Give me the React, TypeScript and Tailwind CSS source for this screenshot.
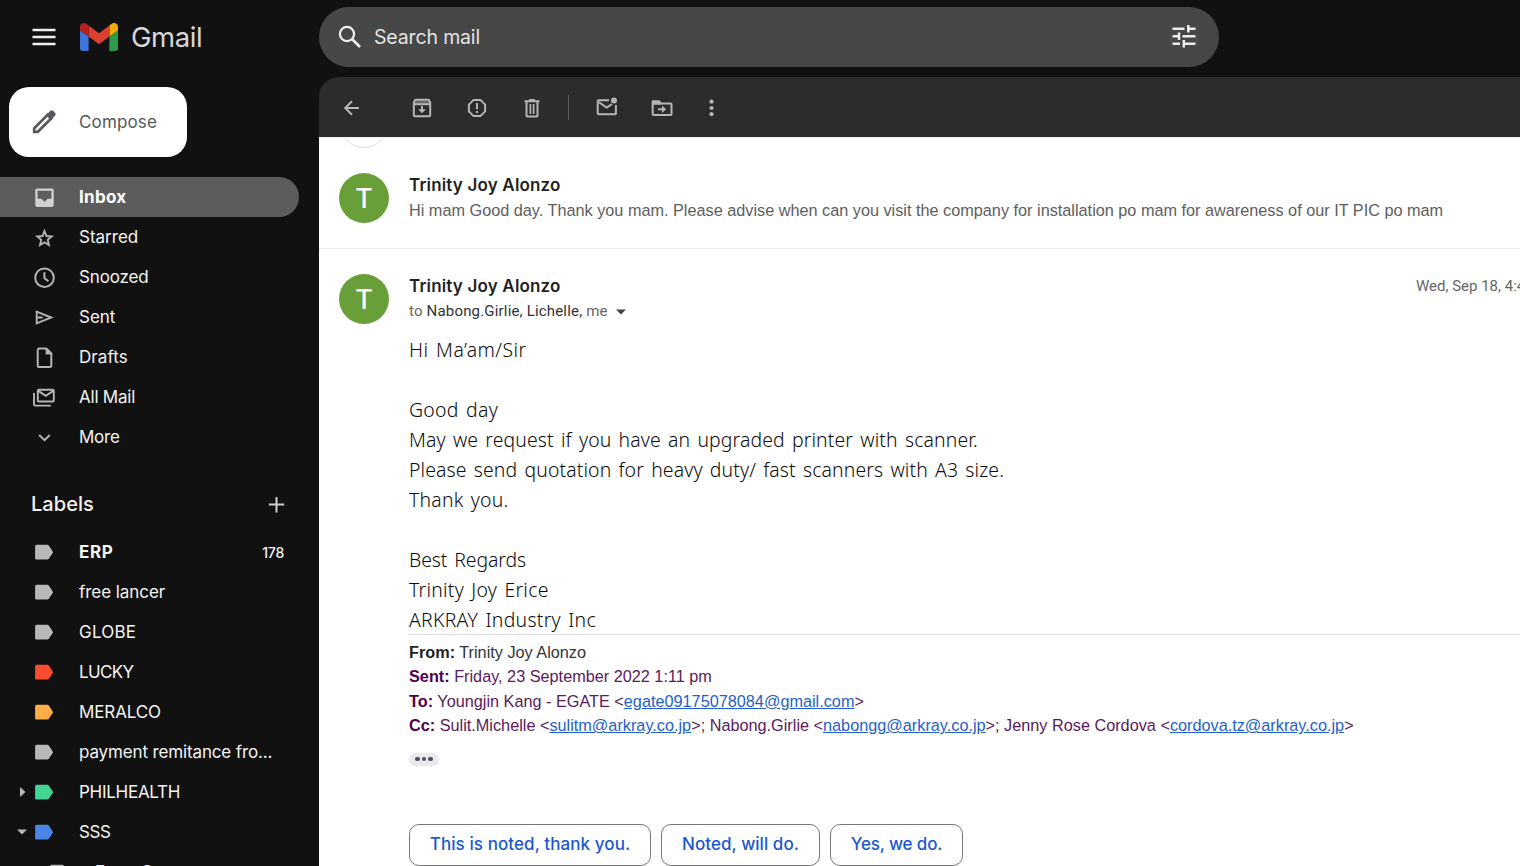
import type { ReactNode } from "react";

const sans = "font-['Inter','Roboto',sans-serif]";

function Icon({ w = 24, h = w, className = "", children }: { w?: number; h?: number; className?: string; children: ReactNode }) {
  return (
    <svg width={w} height={h} viewBox={`0 0 ${w} ${h}`} fill="none" stroke="currentColor" strokeWidth={2} className={`shrink-0 ${className}`}>
      {children}
    </svg>
  );
}

function GmailLogo() {
  return (
    <svg width="38" height="28" viewBox="52 42 88 66" preserveAspectRatio="none" className="shrink-0">
      <path fill="#3f74d8" d="M58 108h14V74L52 59v43c0 3.32 2.69 6 6 6" />
      <path fill="#2f9a4c" d="M120 108h14c3.32 0 6-2.69 6-6V59l-20 15" />
      <path fill="#eeb004" d="M120 48v26l20-15v-8c0-7.42-8.47-11.65-14.4-7.2" />
      <path fill="#da3f31" d="M72 74V48l24 18 24-18v26L96 92" />
      <path fill="#b8211f" d="M52 51v8l20 15V48l-5.6-4.2c-5.94-4.45-14.4-.22-14.4 7.2" />
    </svg>
  );
}

const navItems: { label: string; track: string; icon: ReactNode }[] = [
  {
    label: "Starred",
    track: "tracking-[0px]",
    icon: <path strokeWidth="1.9" strokeLinejoin="miter" d="M12.5 6.1l2 4.9 5.2.45-3.95 3.4 1.2 5.1-4.45-2.7-4.45 2.7 1.2-5.1-3.95-3.4 5.2-.45z" />,
  },
  {
    label: "Snoozed",
    track: "tracking-[-0.15px]",
    icon: (
      <>
        <circle cx="12.5" cy="12.7" r="9.3" />
        <path d="M12.4 7.200v5.8l4 3.2" />
      </>
    ),
  },
  {
    label: "Sent",
    track: "tracking-[0px]",
    icon: <path strokeWidth="1.9" d="M4.7 6.7v11.6l14.6-5.8zM4.7 12.5h6" />,
  },
  {
    label: "Drafts",
    track: "tracking-[0.1px]",
    icon: (
      <>
        <path strokeLinejoin="round" d="M14.5 3.6H7.2c-.9 0-1.5.6-1.5 1.5v15.3c0 .9.6 1.5 1.5 1.5h10.6c.9 0 1.5-.6 1.5-1.5V8.4z" />
        <path fill="currentColor" stroke="none" d="M13.6 3.4h1.6l5 5v1.2h-6.6z" />
      </>
    ),
  },
  {
    label: "All Mail",
    track: "tracking-[-0.23px]",
    icon: (
      <>
        <rect x="5.8" y="4.7" width="16" height="11.800" rx="1" strokeWidth="1.9" />
        <path strokeWidth="1.9" d="M6.3 5.900l7.5 4.900 7.5-4.900M2 8v11.400c0 .7.5 1.2 1.2 1.2h15.6" />
      </>
    ),
  },
  {
    label: "More",
    track: "tracking-[-0.25px]",
    icon: <path d="M7.2 10l5.3 5.2 5.3-5.2" />,
  },
];

const labels: { name: string; color: string; track: string; count?: string; caret?: "right" | "down" }[] = [
  { name: "ERP", color: "text-[#b8b8b8]", track: "font-bold tracking-[0.6px]", count: "178" },
  { name: "free lancer", color: "text-[#b8b8b8]", track: "tracking-[-0.05px]" },
  { name: "GLOBE", color: "text-[#b8b8b8]", track: "tracking-[0.2px]" },
  { name: "LUCKY", color: "text-[#fb4c2f]", track: "tracking-[-0.65px]" },
  { name: "MERALCO", color: "text-[#ffad46]", track: "tracking-[-0.12px]" },
  { name: "payment remitance fro...", color: "text-[#b8b8b8]", track: "tracking-[-0.14px]" },
  { name: "PHILHEALTH", color: "text-[#43d692]", track: "tracking-[-0.27px]", caret: "right" },
  { name: "SSS", color: "text-[#4986e7]", track: "tracking-[-0.4px]", caret: "down" },
];

function Tag() {
  return (
    <Icon w={20} h={16}>
      <path fill="currentColor" stroke="none" d="M2.800.8h10.400c.7 0 1.200.3 1.600.8l4.400 6.600-4.400 6.600c-.4.5-.9.8-1.600.8H2.800C1.900 15.600 1.100 14.900 1.100 14V2.500C1.100 1.600 1.900.8 2.800.8z" />
    </Icon>
  );
}

function Sidebar() {
  return (
    <aside className="flex w-[319px] shrink-0 flex-col overflow-hidden text-[17px] text-[#f4f4f4]">
      <div className="flex h-[77px] shrink-0 items-center pb-[3px] pl-8">
        <Icon w={24} className="text-[#ededed]">
          <path strokeWidth="2.4" d="M.5 5h23M.5 12h23M.5 19h23" />
        </Icon>
        <div className="ml-6 flex items-center">
          <GmailLogo />
          <span className="ml-[13px] text-[27.5px] leading-[30px] tracking-[-0.4px] text-[#d6d6d6]">Gmail</span>
        </div>
      </div>

      <button className="ml-[9px] mt-[10px] flex h-[70px] w-[178px] shrink-0 items-center rounded-[20px] bg-white pl-[23px] text-[#55585c]">
        <Icon w={24}>
          <path strokeWidth="2.700" d="M2.200 21.800v-3.600L15.800 4.600l3.600 3.600L5.800 21.800z" />
          <path fill="currentColor" stroke="none" d="M14 5.200L18.200 1c.9-.9 2.200-.9 3.100 0L23 2.700c.9.9.9 2.200 0 3.100L18.800 10z" />
        </Icon>
        <span className="ml-[23px] pt-[2px] tracking-[0.15px]">Compose</span>
      </button>

      <nav className="mt-5 flex flex-col">
        <a className="flex h-10 w-[299px] items-center rounded-r-full bg-[#5c5c5c] pl-8 font-bold text-white">
          <Icon w={25} className="text-[#d2d2d2]">
            <path
              fill="currentColor"
              stroke="none"
              fillRule="evenodd"
              d="M5.200 3.500h14.600c1.100 0 1.900.8 1.900 1.900V20c0 1.100-.8 1.900-1.900 1.900H5.200c-1.100 0-1.900-.8-1.900-1.900V5.400c0-1.100.8-1.900 1.900-1.900zM5.600 5.800v8h3.800l3.100 3 3.100-3h3.800v-8z"
            />
          </Icon>
          <span className="ml-[22px] pt-[2px] tracking-[0.3px]">Inbox</span>
        </a>
        {navItems.map((item) => (
          <a key={item.label} className="flex h-10 items-center pl-8">
            <Icon w={25} className="text-[#b4b4b4]">{item.icon}</Icon>
            <span className={`ml-[22px] pt-[2px] ${item.track}`}>{item.label}</span>
          </a>
        ))}
      </nav>

      <div className="mt-[27px] flex h-10 shrink-0 items-center justify-between pl-[31px] pr-[34px]">
        <span className="text-[20px] font-medium tracking-[0.05px]">Labels</span>
        <Icon w={17} className="text-[#cfcfcf]">
          <path d="M8.500 1v15.500M.8 8.500h15.400" />
        </Icon>
      </div>

      <div className="mt-2 flex flex-col">
        {labels.map((l) => (
          <a key={l.name} className="flex h-10 shrink-0 items-center pr-[35px]">
            <span className="flex w-[34px] shrink-0 justify-end pr-[7px] text-[#b8b8b8]">
              {l.caret === "right" && (
                <Icon w={10} className="mr-[-1px]"><path fill="currentColor" stroke="none" d="M2 0l5.500 5L2 10z" /></Icon>
              )}
              {l.caret === "down" && (
                <Icon w={10} h={6}><path fill="currentColor" stroke="none" d="M0 .5h10l-5 5z" /></Icon>
              )}
            </span>
            <span className={`flex ${l.color}`}><Tag /></span>
            <span className={`ml-[25px] whitespace-nowrap pt-[2px] ${l.track}`}>{l.name}</span>
            {l.count && <span className="ml-auto text-[14px] font-medium tracking-[-0.2px]">{l.count}</span>}
          </a>
        ))}
        <a className="flex h-10 shrink-0 items-center pl-[49px]">
          <span className="flex text-[#b8b8b8]"><Tag /></span>
          <span className="ml-[26px] pt-[2px]">From C</span>
        </a>
      </div>
    </aside>
  );
}

function SearchBar() {
  return (
    <div className="mt-[7px] flex h-[60px] w-[900px] shrink-0 items-center rounded-full bg-[#474747] pl-[19px] pr-[22px] text-[#ececec]">
      <Icon w={24}>
        <circle cx="9" cy="9" r="7.100" strokeWidth="2.300" />
        <path strokeWidth="2.700" d="M14 14l8 8" />
      </Icon>
      <span className="ml-[12px] pt-[2px] text-[19.5px] tracking-[-0.15px] text-[#e4e4e4]">Search mail</span>
      <Icon w={26} className="ml-auto">
        <path strokeWidth="2.500" d="M1.500 4.800h12M16.500 4.800h8M17.300 1v7.600M1.500 12.300h6M8 8.600v7.500M11.500 12.300h13M1.500 19.800h7.500M12.800 16v7.500M12.800 19.800h11.700" />
      </Icon>
    </div>
  );
}

function Toolbar() {
  return (
    <div className="mt-[10px] flex h-[60px] shrink-0 items-center rounded-tl-[20px] bg-[#2c2c2c] pl-[22px] text-[#b5b5b5]">
      <Icon w={22} className="mt-px">
        <path d="M18 11H5M11 4.200L4.200 11l6.800 6.800" />
      </Icon>
      <Icon w={22} className="ml-[47.5px] mt-px">
        <path fill="currentColor" fillOpacity=".45" stroke="none" d="M3 3.500h16v4H3z" />
        <path strokeLinejoin="round" d="M4.300 2.800h13.400l1.500 2.400v13c0 .6-.4 1-1 1H3.800c-.6 0-1-.4-1-1v-13zM3 7.200h16" />
        <path fill="currentColor" stroke="none" d="M10 8.900h2v3.300h2.900L11 16.200l-3.900-4H10z" />
      </Icon>
      <Icon w={22} className="ml-[33px] mt-px">
        <path strokeLinejoin="round" d="M7.600 2.900h6.800l4.700 4.700v6.800l-4.700 4.700H7.600l-4.700-4.700V7.600z" />
        <path d="M11 6v6.200M11 14v2" />
      </Icon>
      <Icon w={22} className="ml-[33px] mt-px">
        <path d="M3.500 4.300h15M8 2.900h6M5.500 4.500v14.200c0 .5.300.8.800.8h9.400c.5 0 .8-.3.800-.8V4.500" />
        <path strokeWidth="1.700" d="M9.400 7v10M12.600 7v10" />
      </Icon>
      <div className="ml-[25.5px] h-[25px] w-px bg-[#5a5a5a]" />
      <Icon w={24} h={22} className="ml-[26px]">
        <path strokeLinejoin="round" d="M14 4.300H3.500c-.4 0-.8.3-.8.8v12.300c0 .5.400.8.800.8h16.600c.5 0 .8-.3.800-.8V9" />
        <path d="M3.500 6l8.300 5.600L17 8" />
        <circle cx="19" cy="4.400" r="3" fill="currentColor" stroke="none" />
      </Icon>
      <Icon w={22} className="ml-[31.5px] mt-px">
        <path strokeLinejoin="round" d="M1.700 4.200h6.200l2.200 2.200h9.600c.4 0 .8.300.8.800v10.100c0 .5-.4.800-.8.800H2.500c-.5 0-.8-.3-.8-.8z" />
        <path fill="currentColor" stroke="none" d="M1.700 4.200h6.200l2.200 2.200v1.400H1.700z" />
        <path fill="currentColor" stroke="none" d="M7 11.300h4V8.500l4.200 3.800-4.200 3.800v-2.800H7z" />
      </Icon>
      <Icon w={6} h={20} className="ml-[36.5px] mt-px">
        <g fill="currentColor" stroke="none">
          <circle cx="2.500" cy="3.700" r="2.100" />
          <circle cx="2.500" cy="10" r="2.100" />
          <circle cx="2.500" cy="16.200" r="2.100" />
        </g>
      </Icon>
    </div>
  );
}

function Avatar() {
  return (
    <div className="flex size-[50px] shrink-0 items-center justify-center rounded-full bg-[#689f38] text-[27px] font-medium text-white">
      <span className="leading-none">T</span>
    </div>
  );
}

function Sender() {
  return <div className="text-[17px] font-semibold leading-[24px] tracking-[0.17px] text-[#1f1f1f]">Trinity Joy Alonzo</div>;
}

function Mail({ children }: { children: string }) {
  return <a className="text-[#1f5fcc] underline">{children}</a>;
}

const body: { text: string; track: string }[] = [
  { text: "Hi Ma’am/Sir", track: "tracking-[0.47px]" },
  { text: "", track: "" },
  { text: "Good day", track: "tracking-[0.3px]" },
  { text: "May we request if you have an upgraded printer with scanner.", track: "tracking-[0.13px]" },
  { text: "Please send quotation for heavy duty/ fast scanners with A3 size.", track: "tracking-[0.13px]" },
  { text: "Thank you.", track: "tracking-[0.22px]" },
  { text: "", track: "" },
  { text: "Best Regards", track: "tracking-[-0.08px]" },
  { text: "Trinity Joy Erice", track: "tracking-[0.26px]" },
  { text: "ARKRAY Industry Inc", track: "tracking-[0.28px]" },
];

const replies = [
  { text: "This is noted, thank you.", box: "w-[242px] tracking-[0.08px]" },
  { text: "Noted, will do.", box: "w-[159px] tracking-[0.05px]" },
  { text: "Yes, we do.", box: "w-[133px] tracking-[-0.15px]" },
];

function Conversation() {
  return (
    <main className="flex min-h-0 flex-1 flex-col overflow-hidden border-t border-[#f0f0f0] bg-white">
      <div className="flex h-[10px] shrink-0 flex-col justify-end pl-5">
        <div className="size-[50px] shrink-0 rounded-full border border-[#dcdcdc]" />
      </div>

      <section className="flex h-[101px] shrink-0 border-b border-[#ececec] pl-5 pt-[25px]">
        <Avatar />
        <div className="ml-5 whitespace-nowrap">
          <Sender />
          <p className="mt-[1px] font-['Liberation_Sans',Arial,sans-serif] text-[16.25px] leading-[24px] text-[#5e5e5e]">
            Hi mam Good day. Thank you mam. Please advise when can you visit the company for installation po mam for awareness of our IT PIC po mam
          </p>
        </div>
      </section>

      <section className="flex pl-5 pt-[25px]">
        <Avatar />
        <div className="ml-5 min-w-0 flex-1 whitespace-nowrap">
          <div className="flex">
            <Sender />
            <span className="ml-auto w-[104px] overflow-hidden font-['Roboto',sans-serif] text-[15px] leading-[25px] text-[#666]">Wed, Sep 18, 4:45 PM</span>
          </div>
          <div className="flex h-[25px] items-center font-['Roboto',sans-serif] text-[15px] tracking-[0.18px] text-[#666]">
            <span>to <span className="text-[#333]">Nabong.Girlie, Lichelle,</span> me</span>
            <Icon w={10} h={6} className="ml-[8px] mt-px text-[#444]"><path fill="currentColor" stroke="none" d="M0 .5h10l-5 5z" /></Icon>
          </div>

          <div className="mt-[11px] h-[300px] border-b border-[#dcdcdc] font-['Noto_Sans','Open_Sans',sans-serif] text-[19.4px] font-light leading-[30px] text-[#0c0c0c] [word-spacing:2px]">
            {body.map((line, i) => (
              <p key={i} className={`h-[30px] ${line.track}`}>{line.text}</p>
            ))}
          </div>

          <div className="mt-[5px] font-['Liberation_Sans',Arial,sans-serif] text-[16.25px] leading-[24.4px] text-[#5a1a5c]">
            <p className="text-[#333]"><b className="text-[#222]">From:</b> Trinity Joy Alonzo</p>
            <p><b className="text-[#500050]">Sent:</b> Friday, 23 September 2022 1:11 pm</p>
            <p><b className="text-[#500050]">To:</b> Youngjin Kang - EGATE &lt;<Mail>egate09175078084@gmail.com</Mail>&gt;</p>
            <p>
              <b className="text-[#500050]">Cc:</b> Sulit.Michelle &lt;<Mail>sulitm@arkray.co.jp</Mail>&gt;; Nabong.Girlie &lt;<Mail>nabongg@arkray.co.jp</Mail>&gt;; Jenny Rose Cordova &lt;<Mail>cordova.tz@arkray.co.jp</Mail>&gt;
            </p>
          </div>

          <div className="mt-[15px] flex h-[13px] w-[30px] items-center justify-center gap-[2px] rounded-full bg-[#e8eaed]">
            <i className="size-[4.5px] rounded-full bg-[#4d5156]" />
            <i className="size-[4.5px] rounded-full bg-[#4d5156]" />
            <i className="size-[4.5px] rounded-full bg-[#4d5156]" />
          </div>

          <div className="mt-[58px] flex gap-[10px]">
            {replies.map((r) => (
              <button key={r.text} className={`flex h-[42px] items-center justify-center rounded-[10px] border border-[#747775] text-[17px] font-medium text-[#1a58cf] ${r.box}`}>
                {r.text}
              </button>
            ))}
          </div>
        </div>
      </section>
    </main>
  );
}

export default function App() {
  return (
    <div className={`flex h-[866px] w-[1520px] overflow-hidden bg-[#111111] ${sans}`}>
      <Sidebar />
      <div className="flex min-w-0 flex-1 flex-col">
        <SearchBar />
        <Toolbar />
        <Conversation />
      </div>
    </div>
  );
}
